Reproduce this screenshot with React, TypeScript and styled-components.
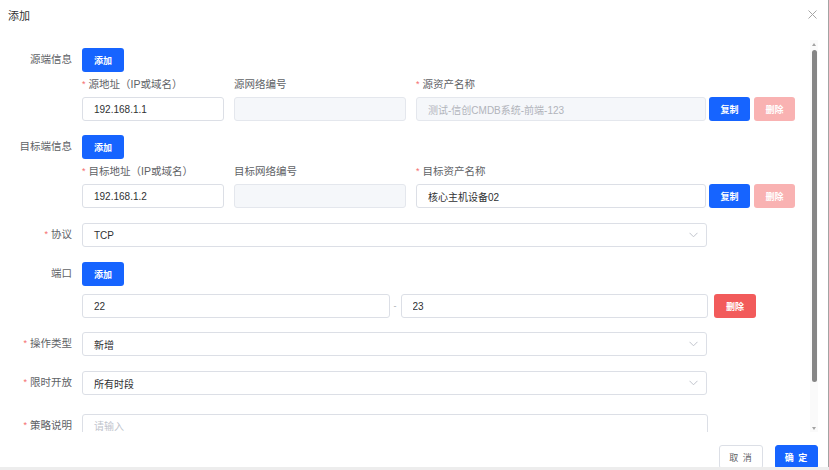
import React from 'react';
import styled, { createGlobalStyle } from 'styled-components';

const GlobalStyle = createGlobalStyle`
  html,
  body {
    margin: 0;
    padding: 0;
    background: #ededed;
  }
  body {
    font-family: "Liberation Sans", "Noto Sans CJK SC", sans-serif;
    color: #303133;
  }
  * {
    box-sizing: border-box;
  }
`;

/**
 * Endpoint blocks (source / target).
 */
const endpoints = [
  {
    title: '源端信息',
    addressLabel: '源地址（IP或域名）',
    networkLabel: '源网络编号',
    assetLabel: '源资产名称',
    address: '192.168.1.1',
    asset: '测试-信创CMDB系统-前端-123',
    assetLocked: true,
    space: 8,
  },
  {
    title: '目标端信息',
    addressLabel: '目标地址（IP或域名）',
    networkLabel: '目标网络编号',
    assetLabel: '目标资产名称',
    address: '192.168.1.2',
    asset: '核心主机设备02',
    assetLocked: false,
    space: 14,
  },
];

function Chevron() {
  return (
    <svg width="9" height="6" viewBox="0 0 9 6" fill="none">
      <path d="M0.5 0.8 L4.5 4.8 L8.5 0.8" stroke="#c0c4cc" strokeWidth="1" />
    </svg>
  );
}

function SelectBox({ value }) {
  return (
    <Select>
      <span>{value}</span>
      <Chevron />
    </Select>
  );
}

function EndpointItem({ endpoint }) {
  return (
    <FormItem $space={endpoint.space}>
      <ItemLabel>{endpoint.title}</ItemLabel>
      <ItemContent>
        <PrimaryButton>添加</PrimaryButton>
        <FieldRow>
          <Field $width={142}>
            <SubLabel $required>{endpoint.addressLabel}</SubLabel>
            <TextInput readOnly value={endpoint.address} />
          </Field>
          <Field $width={172}>
            <SubLabel>{endpoint.networkLabel}</SubLabel>
            <TextInput readOnly disabled value="" />
          </Field>
          <Field>
            <SubLabel $required>{endpoint.assetLabel}</SubLabel>
            <ControlLine>
              <AssetInput
                readOnly
                disabled={endpoint.assetLocked}
                value={endpoint.asset}
              />
              <ActionGroup>
                <SmallButton>复制</SmallButton>
                <SmallButton $variant="dangerMuted">删除</SmallButton>
              </ActionGroup>
            </ControlLine>
          </Field>
        </FieldRow>
      </ItemContent>
    </FormItem>
  );
}

export default function App() {
  return (
    <>
      <GlobalStyle />
      <Dialog>
        <Header>
          <Title>添加</Title>
          <CloseButton>
            <svg width="9" height="9" viewBox="0 0 9 9">
              <path d="M0.5 0.5 L8.5 8.5 M8.5 0.5 L0.5 8.5" stroke="#a6a6a6" strokeWidth="1" />
            </svg>
          </CloseButton>
        </Header>

        <Body>
          <FormScroll>
            {endpoints.map((endpoint) => (
              <EndpointItem key={endpoint.title} endpoint={endpoint} />
            ))}

            <FormItem $space={15}>
              <ItemLabel $required>协议</ItemLabel>
              <ItemContent>
                <SelectBox value="TCP" />
              </ItemContent>
            </FormItem>

            <FormItem $space={15}>
              <ItemLabel>端口</ItemLabel>
              <ItemContent $gap={8}>
                <PrimaryButton>添加</PrimaryButton>
                <ControlLine $gap={6}>
                  <RangeBox>
                    <TextInput readOnly value="22" />
                    <RangeDash>-</RangeDash>
                    <TextInput readOnly value="23" />
                  </RangeBox>
                  <SmallButton $variant="danger">删除</SmallButton>
                </ControlLine>
              </ItemContent>
            </FormItem>

            <FormItem $space={14}>
              <ItemLabel $required>操作类型</ItemLabel>
              <ItemContent>
                <SelectBox value="新增" />
              </ItemContent>
            </FormItem>

            <FormItem $space={15}>
              <ItemLabel $required>限时开放</ItemLabel>
              <ItemContent>
                <SelectBox value="所有时段" />
              </ItemContent>
            </FormItem>

            <FormItem $space={19}>
              <ItemLabel $required>策略说明</ItemLabel>
              <ItemContent>
                <TextArea readOnly placeholder="请输入" />
              </ItemContent>
            </FormItem>
          </FormScroll>

          <ScrollRail>
            <RailArrow $dir="up" />
            <RailThumb />
            <RailSpacer />
            <RailArrow $dir="down" />
          </ScrollRail>
        </Body>

        <Footer>
          <FooterButton>取 消</FooterButton>
          <FooterButton $primary>确 定</FooterButton>
        </Footer>
      </Dialog>
    </>
  );
}

const requiredMark = `
  &::before {
    content: '*';
    color: #f56c6c;
    margin-right: 3px;
    font-size: 9px;
    line-height: 0;
    vertical-align: 1px;
  }
`;

const Dialog = styled.div`
  width: 829px;
  height: 467px;
  background: #fff;
  border-right: 1px solid #a3a3a3;
  display: flex;
  flex-direction: column;
  overflow: hidden;
`;

const Header = styled.div`
  height: 40px;
  flex-shrink: 0;
  display: flex;
  align-items: flex-start;
  justify-content: space-between;
  padding: 10px 11px 0 8px;
`;

const Title = styled.div`
  font-size: 11px;
  line-height: 12px;
  color: #303133;
`;

const CloseButton = styled.div`
  width: 9px;
  height: 9px;
  display: flex;
  svg {
    display: block;
  }
`;

const Body = styled.div`
  flex: 1;
  min-height: 0;
  display: flex;
  padding-right: 10px;
`;

const FormScroll = styled.div`
  flex: 1;
  overflow: hidden;
  display: flex;
  flex-direction: column;
`;

const FormItem = styled.div`
  display: flex;
  flex-shrink: 0;
  margin-top: ${(p) => p.$space}px;
`;

const ItemLabel = styled.div`
  width: 72px;
  height: 24px;
  flex-shrink: 0;
  text-align: right;
  font-size: 10.5px;
  line-height: 23px;
  color: #606266;
  ${(p) => p.$required && requiredMark}
`;

const ItemContent = styled.div`
  margin-left: 10px;
  display: flex;
  flex-direction: column;
  align-items: flex-start;
  gap: ${(p) => p.$gap || 0}px;
`;

const FieldRow = styled.div`
  display: flex;
  gap: 10px;
`;

const Field = styled.div`
  display: flex;
  flex-direction: column;
  width: ${(p) => (p.$width ? `${p.$width}px` : 'auto')};
`;

const SubLabel = styled.div`
  height: 25px;
  font-size: 10.5px;
  line-height: 13px;
  padding-top: 6px;
  color: #606266;
  white-space: nowrap;
  ${(p) => p.$required && requiredMark}
`;

const ControlLine = styled.div`
  display: flex;
  align-items: center;
  gap: ${(p) => (p.$gap === undefined ? 3 : p.$gap)}px;
`;

const ActionGroup = styled.div`
  display: flex;
  gap: 4px;
`;

const TextInput = styled.input`
  width: 100%;
  height: 24px;
  margin: 0;
  padding: 0 11px;
  border: 1px solid #dcdfe6;
  border-radius: 3px;
  background: #fff;
  font-family: inherit;
  font-size: 10px;
  color: #303133;
  outline: none;

  &:disabled {
    background: #f5f7fa;
    border-color: #e4e7ed;
    color: #b1b4ba;
    -webkit-text-fill-color: #b1b4ba;
  }
`;

const AssetInput = styled(TextInput)`
  width: 290px;
`;

const RangeBox = styled.div`
  width: 626px;
  display: flex;
  align-items: center;
`;

const RangeDash = styled.span`
  width: 11px;
  flex-shrink: 0;
  text-align: center;
  font-size: 9px;
  color: #a8abb2;
`;

const Select = styled.div`
  width: 625px;
  height: 24px;
  padding: 0 8px 0 11px;
  border: 1px solid #dcdfe6;
  border-radius: 3px;
  display: flex;
  align-items: center;
  justify-content: space-between;
  font-size: 10px;
  color: #303133;
  svg {
    display: block;
  }
`;

const TextArea = styled.textarea`
  width: 626px;
  height: 48px;
  margin: 0;
  padding: 6px 11px;
  border: 1px solid #dcdfe6;
  border-radius: 3px;
  resize: none;
  font-family: inherit;
  font-size: 10px;
  line-height: 12px;
  outline: none;

  &::placeholder {
    color: #c0c4cc;
  }
`;

const buttonColors = {
  primary: '#1664ff',
  danger: '#f25b5b',
  dangerMuted: '#f9b2b2',
};

const PrimaryButton = styled.button`
  width: 42px;
  height: 24px;
  flex-shrink: 0;
  margin: 0;
  padding: 0;
  border: none;
  border-radius: 3px;
  background: #1664ff;
  color: #fff;
  font-family: inherit;
  font-size: 9px;
  font-weight: 700;
`;

const SmallButton = styled(PrimaryButton)`
  width: ${(p) => (p.$variant === 'danger' ? 42 : 41)}px;
  background: ${(p) => buttonColors[p.$variant || 'primary']};
`;

const ScrollRail = styled.div`
  width: 8px;
  background: #fafafa;
  display: flex;
  flex-direction: column;
  align-items: center;
`;

const RailArrow = styled.div`
  height: 8px;
  width: 8px;
  display: flex;
  align-items: center;
  justify-content: center;
  &::after {
    content: '';
    border-left: 2.5px solid transparent;
    border-right: 2.5px solid transparent;
    ${(p) =>
      p.$dir === 'up'
        ? 'border-bottom: 3px solid #a3a3a3;'
        : 'border-top: 3px solid #a3a3a3;'}
  }
`;

const RailThumb = styled.div`
  width: 5px;
  height: 332px;
  margin-top: 2px;
  border-radius: 3px;
  background: #858585;
`;

const RailSpacer = styled.div`
  flex: 1;
`;

const Footer = styled.div`
  height: 35px;
  flex-shrink: 0;
  display: flex;
  justify-content: flex-end;
  align-items: flex-start;
  gap: 12px;
  padding: 13px 10px 0 0;
`;

const FooterButton = styled.button`
  width: ${(p) => (p.$primary ? 43 : 44)}px;
  height: 24px;
  margin: 0;
  padding: 0;
  border-radius: 3px;
  border: 1px solid ${(p) => (p.$primary ? '#1664ff' : '#dcdfe6')};
  background: ${(p) => (p.$primary ? '#1664ff' : '#fff')};
  color: ${(p) => (p.$primary ? '#fff' : '#606266')};
  font-family: inherit;
  font-size: 9px;
  font-weight: ${(p) => (p.$primary ? 700 : 400)};
  letter-spacing: 1px;
`;
